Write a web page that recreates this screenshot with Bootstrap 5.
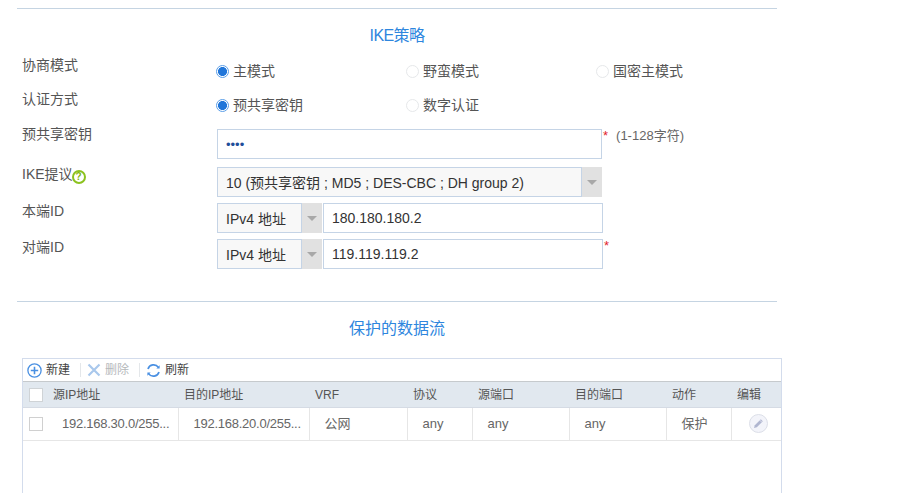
<!DOCTYPE html>
<html lang="zh">
<head>
<meta charset="utf-8">
<title>IKE策略</title>
<link href="https://cdn.jsdelivr.net/npm/bootstrap@5.3.0/dist/css/bootstrap.min.css" rel="stylesheet">
<style>
html,body{height:493px;overflow:hidden}
body{margin:0;background:#fff;color:#555;font:14px/20px "Liberation Sans","Noto Sans CJK SC",sans-serif}
.pagewrap{padding:8px 0 0 17px;width:765px}
.rule{height:1px;background:#c5d4e2;width:760px}
.rule-low{margin-top:26px}
.sect-title{color:#2e86de;font-size:16px;line-height:22px;text-align:center;width:760px}
.t1{margin-top:16px;margin-bottom:8px;letter-spacing:-.6px}
.frow{display:flex;padding-left:5px}
.flabel{width:195px;flex:none;line-height:20px}
.flabel-r{width:194px}
.r1{height:34px}
.r2{height:40px}
.r3{height:38px}
.r4{height:36px}
.r5{height:36px}
.r3 .flabel{margin-top:-5px}
.r4 .flabel{margin-top:-3px}
.r5 .flabel{margin-top:-2px}
.radio-col{width:190px;flex:none;display:flex;align-items:center;gap:4px;height:20px;margin-top:6px}
.form-check-input.rd{width:13px;height:13px;margin:0;border:1px solid #e6e8ea;background-image:none;background-color:#fff;box-shadow:none;flex:none}
.form-check-input.rd:checked{border-color:#5a9ee8;background-color:#fff;background-image:radial-gradient(circle,#2176d9 0,#2176d9 4.2px,transparent 4.8px)}
.txtbox{height:30px;border:1px solid #c5d4e6;border-radius:0;padding:0 8px;font-size:14px;color:#333;box-shadow:none;background-color:#fff}
.txtbox:focus{box-shadow:none;border-color:#c5d4e6}
.w-pass{width:385px;flex:none}
.pass-val{color:#1f4e9a;font-size:13px}
.star{color:#e2222a;font-size:13px;line-height:14px;padding-left:1px;height:14px}
.hint{font-size:13px;padding-left:8px;line-height:14px;color:#666}
.combo{display:flex;flex:none;height:30px}
.combo select{appearance:none;-webkit-appearance:none;background:#f8f8f8;border:1px solid #c5d4e6;border-radius:0;color:#333;font:14px "Liberation Sans","Noto Sans CJK SC",sans-serif;padding:2px 0 0 8px;outline:none}
.arrowbox{background:#e1e1e1;width:20px;display:flex;align-items:center;justify-content:center}
.arrowbox i{display:block;width:0;height:0;border-left:5px solid transparent;border-right:5px solid transparent;border-top:5px solid #a8a8a8}
.sel-long{width:365px}
.sel-short{width:85px}
.w-id{width:280px;flex:none;margin-left:1px}
.helpmark{display:inline-flex;width:14px;height:14px;border:2px solid #8cc21f;border-radius:50%;color:#7fb512;font-size:10px;font-weight:bold;line-height:1;align-items:center;justify-content:center;margin-left:-1px;vertical-align:-1px}
.t2{margin-top:16px;margin-bottom:18px}
.tbl-panel{margin-left:5px;width:760px;height:135px;border:1px solid #d3dcec;border-bottom:0}
.toolbar{height:22px;display:flex;align-items:center;font-size:12px;color:#444;padding-left:4px}
.tool{display:flex;align-items:center;gap:4px}
.tool.off{color:#b5b8bb}
.sep{width:1px;height:14px;background:#e4e7ea;margin:0 6px 0 10px}
.grid-t{table-layout:fixed;border-collapse:collapse;width:758px;margin:0;font-size:12px;color:#555}
.grid-t th{background:#e1e8ef;font-weight:400;height:26px;padding:0 0 0 6px;border-top:1px solid #c6cacd;border-bottom:1px solid #d5dbe4;color:#555;box-shadow:none;vertical-align:middle}
.grid-t td{height:33px;padding:0 0 0 15px;border-right:1px solid #e6e6e6;border-bottom:1px solid #e6e6e6;font-size:13px;color:#666;box-shadow:none;vertical-align:middle;white-space:nowrap}
.grid-t td.ck{border-right:0;padding:0 0 0 6px}
.grid-t td.ip{letter-spacing:-.25px}
.grid-t td:last-child{border-right:0;padding:0}
.bx{width:14px;height:14px;border:1px solid #d0d0d0;background:#fff;display:block;margin:0}
th .bx{border-color:#cfd3d6}
.edit-btn{width:19px;height:19px;border-radius:50%;border:1px solid #dcdfe8;background:#f3f4fa;display:flex;align-items:center;justify-content:center;margin:-1px auto 0 17px}
</style>
</head>
<body>
<div class="pagewrap">
  <div class="rule"></div>
  <div class="sect-title t1">IKE策略</div>

  <div class="frow r1">
    <div class="flabel flabel-r">协商模式</div>
    <label class="radio-col"><input class="form-check-input rd" type="radio" name="m" checked>主模式</label>
    <label class="radio-col"><input class="form-check-input rd" type="radio" name="m">野蛮模式</label>
    <label class="radio-col"><input class="form-check-input rd" type="radio" name="m">国密主模式</label>
  </div>
  <div class="frow r2">
    <div class="flabel flabel-r">认证方式</div>
    <label class="radio-col"><input class="form-check-input rd" type="radio" name="a" checked>预共享密钥</label>
    <label class="radio-col"><input class="form-check-input rd" type="radio" name="a">数字认证</label>
  </div>
  <div class="frow r3">
    <div class="flabel">预共享密钥</div>
    <input class="form-control txtbox w-pass pass-val" type="password" value="1234">
    <span class="star">*</span><span class="hint">(1-128字符)</span>
  </div>
  <div class="frow r4">
    <div class="flabel">IKE提议<span class="helpmark">?</span></div>
    <div class="combo">
      <select class="sel-long"><option>10 (预共享密钥 ; MD5 ; DES-CBC ; DH group 2)</option></select>
      <span class="arrowbox"><i></i></span>
    </div>
  </div>
  <div class="frow r5">
    <div class="flabel">本端ID</div>
    <div class="combo">
      <select class="sel-short"><option>IPv4 地址</option></select>
      <span class="arrowbox"><i></i></span>
    </div>
    <input class="form-control txtbox w-id" type="text" value="180.180.180.2">
  </div>
  <div class="frow r5">
    <div class="flabel">对端ID</div>
    <div class="combo">
      <select class="sel-short"><option>IPv4 地址</option></select>
      <span class="arrowbox"><i></i></span>
    </div>
    <input class="form-control txtbox w-id" type="text" value="119.119.119.2">
    <span class="star">*</span>
  </div>

  <div class="rule rule-low"></div>
  <div class="sect-title t2">保护的数据流</div>

  <div class="tbl-panel">
    <div class="toolbar">
      <span class="tool">
        <svg width="15" height="15" viewBox="0 0 15 15" fill="none" stroke="#4a90e2" stroke-width="1.3"><circle cx="7.500" cy="7.500" r="6.600"/><path d="M7.500 3.800v7.400M3.800 7.500h7.400" stroke-width="1.600"/></svg>新建
      </span>
      <span class="sep"></span>
      <span class="tool off">
        <svg width="14" height="14" viewBox="0 0 14 14" fill="none" stroke="#a9c8ec" stroke-width="2.200"><path d="M1.500 1.500l11 11M12.500 1.500l-11 11"/></svg>删除
      </span>
      <span class="sep"></span>
      <span class="tool">
        <svg width="15" height="15" viewBox="0 0 15 15" fill="none" stroke="#4a90e2" stroke-width="1.700"><path d="M2 6a5.800 5.800 0 0 1 10.400-1.600"/><path d="M13 9a5.800 5.800 0 0 1-10.400 1.600"/><path d="M13.600 2.200v3.200h-3.200z" fill="#4a90e2" stroke="none"/><path d="M1.400 12.800V9.600h3.200z" fill="#4a90e2" stroke="none"/></svg>刷新
      </span>
    </div>
    <table class="table grid-t">
      <colgroup>
        <col style="width:24px"><col style="width:131px"><col style="width:131px"><col style="width:98px"><col style="width:65px"><col style="width:97px"><col style="width:97px"><col style="width:65px"><col style="width:50px">
      </colgroup>
      <thead>
        <tr><th><span class="bx"></span></th><th>源IP地址</th><th>目的IP地址</th><th>VRF</th><th>协议</th><th>源端口</th><th>目的端口</th><th>动作</th><th>编辑</th></tr>
      </thead>
      <tbody>
        <tr>
          <td class="ck"><span class="bx"></span></td>
          <td class="ip">192.168.30.0/255...</td>
          <td class="ip">192.168.20.0/255...</td>
          <td>公网</td><td>any</td><td>any</td><td>any</td><td>保护</td>
          <td><span class="edit-btn"><svg width="11" height="11" viewBox="0 0 11 11"><path d="M7.800 1.200l2 2-6 6-2.800.8.800-2.800z" fill="#b0b6d0"/><path d="M6.800 2.200l2 2" stroke="#f3f4fa" stroke-width=".7"/></svg></span></td>
        </tr>
      </tbody>
    </table>
  </div>
</div>
</body>
</html>
